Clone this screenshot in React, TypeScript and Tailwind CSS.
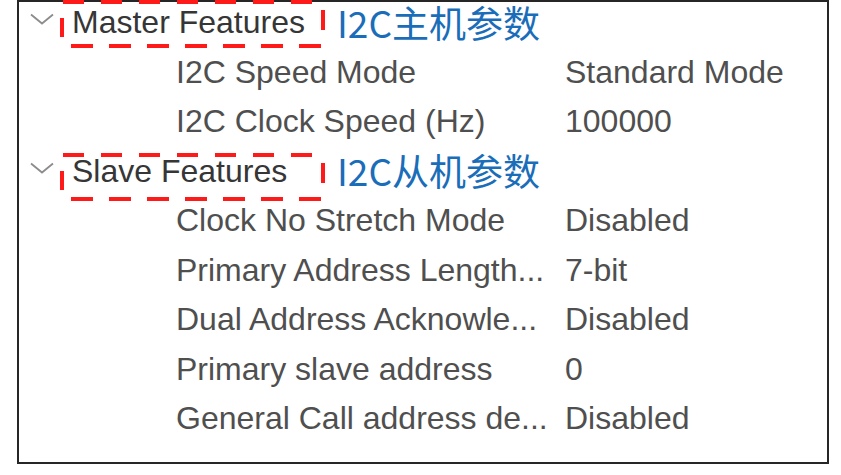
const master = [
  { label: "I2C Speed Mode", value: "Standard Mode" },
  { label: "I2C Clock Speed (Hz)", value: "100000" },
];

const slave = [
  { label: "Clock No Stretch Mode", value: "Disabled" },
  { label: "Primary Address Length...", value: "7-bit" },
  { label: "Dual Address Acknowle...", value: "Disabled" },
  { label: "Primary slave address", value: "0" },
  { label: "General Call address de...", value: "Disabled" },
];

// red dashed highlight laid over a group header
function DashedBox({ className }: { className: string }) {
  return (
    <svg
      className={`absolute pointer-events-none ${className}`}
      width="268"
      height="48"
      viewBox="0 0 268 48"
    >
      <g stroke="#ff1a1a" strokeWidth="4" fill="none">
        <path d="M3 2 H256" strokeDasharray="21 17" />
        <path d="M11 46 H266" strokeDasharray="22 16" />
        <path d="M2 18 V37" />
        <path d="M263 10 V30" />
      </g>
    </svg>
  );
}

function Chevron() {
  return (
    <svg width="24" height="12" viewBox="0 0 24 12" className="ml-[11px] -mt-[6px] shrink-0">
      <path d="M1 1.5 L12 10.5 L23 1.5" stroke="#8c8c8c" strokeWidth="1.8" fill="none" />
    </svg>
  );
}

function GroupHeader({ title, note }: { title: string; note: string }) {
  return (
    <div className="flex items-center h-[49.5px]">
      <Chevron />
      <span className="ml-[18px] w-[265px] text-[#363636] whitespace-nowrap">{title}</span>
      <span
        className="text-[37px] leading-[1.12] text-[#1a6db8] whitespace-nowrap"
        style={{ fontFamily: '"Noto Sans CJK SC", "Noto Sans", sans-serif' }}
      >
        {note}
      </span>
    </div>
  );
}

function Row({ label, value }: { label: string; value: string }) {
  return (
    <div className="flex items-center h-[49.5px]">
      <span className="ml-[157px] w-[389px] whitespace-nowrap text-[#4f4f4f]">{label}</span>
      <span className="text-[#4f4f4f] whitespace-nowrap">{value}</span>
    </div>
  );
}

export default function App() {
  return (
    <div className="relative w-[841px] h-[475px] bg-white overflow-hidden">
      <div
        className="ml-[17px] w-[812px] h-[464px] border-2 border-[#262626] bg-white text-[32px]"
        style={{ fontFamily: '"Liberation Sans", Arial, sans-serif' }}
      >
        <div className="-mt-[4.5px]">
          <GroupHeader title="Master Features" note="I2C主机参数" />
          {master.map((r) => (
            <Row key={r.label} {...r} />
          ))}
          <GroupHeader title="Slave Features" note="I2C从机参数" />
          {slave.map((r) => (
            <Row key={r.label} {...r} />
          ))}
        </div>
      </div>
      <DashedBox className="left-[60px] top-[0px]" />
      <DashedBox className="left-[60px] top-[153px]" />
    </div>
  );
}
